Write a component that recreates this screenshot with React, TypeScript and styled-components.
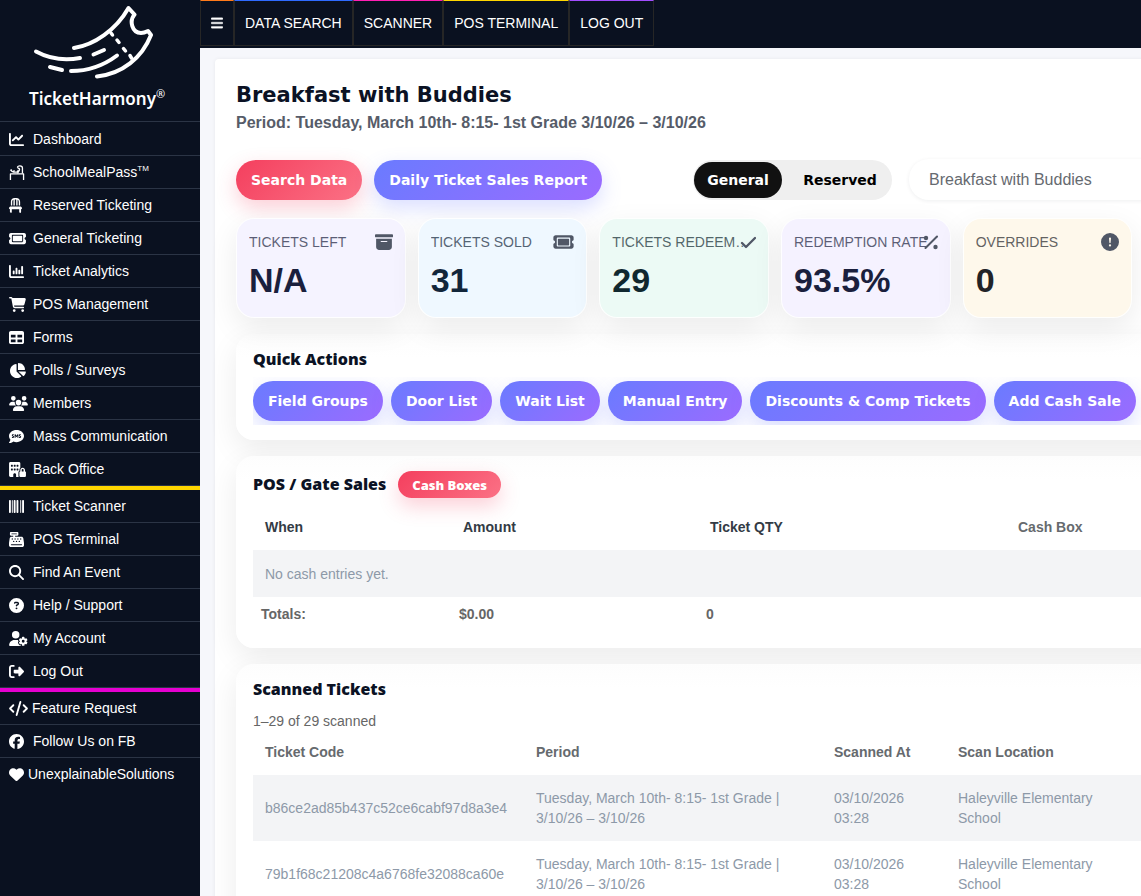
import React from "react";
import styled, { createGlobalStyle, css } from "styled-components";
import {
  FaBarcode, FaBars, FaBuildingLock, FaCartShopping, FaCashRegister, FaChair, FaChartColumn, FaChartLine,
  FaChartPie, FaCircleQuestion, FaCode, FaCommentSms, FaFacebook, FaHeart, FaMagnifyingGlass,
  FaRightFromBracket, FaTable, FaTicket, FaUserGear, FaUsers,
} from "react-icons/fa6";
import { BsArchiveFill, BsExclamationCircleFill } from "react-icons/bs";

const heavy = `"DejaVu Sans", "Liberation Sans", sans-serif`;
const rounded = `"Noto Sans", "Open Sans", sans-serif`;

const GlobalStyle = createGlobalStyle`
  *, *::before, *::after { box-sizing: border-box; }
  body { margin: 0; background: #f6f7fb; font-family: "Liberation Sans", Arial, sans-serif; font-size: 14px; color: #0b1224; }
  h1, h2, p, ul { margin: 0; padding: 0; }
  button, input { font: inherit; border: 0; }
  a { color: inherit; text-decoration: none; }
`;

const Shell = styled.div`
  display: grid;
  grid-template-columns: 200px minmax(0, 1fr);
  height: 100vh;
  overflow: hidden;
`;

const Sidebar = styled.aside`
  background: #0a1120;
  color: #fff;
  overflow: hidden;
`;

const Brand = styled.a`
  display: flex;
  flex-direction: column;
  height: 122px;
  padding: 4px 0 0 29px;
  margin-bottom: 1px;
  border-bottom: 1px solid #2b3445;
`;

const BrandName = styled.span`
  display: flex;
  font-family: ${rounded};
  font-size: 17px;
  font-weight: 600;
  line-height: 24px;
  padding-top: 7px;
  sup { font-size: 11px; font-weight: 400; line-height: 14px; }
`;

const NavList = styled.ul<{ $bar?: string }>`
  list-style: none;
  ${(p) => p.$bar && css`border-bottom: 4px solid ${p.$bar};`}
`;

const NavItem = styled.li`
  border-bottom: 1px solid #2b3445;
  ${NavList}:last-child &:last-child { border-bottom: 0; }
`;

const NavLink = styled.a`
  display: flex;
  align-items: center;
  height: 32px;
  padding-left: 9px;
  white-space: nowrap;
  sup { font-size: 8px; line-height: 10px; align-self: flex-start; padding-top: 8px; }
`;

const NavIcon = styled.span<{ $slot: number; $w: number }>`
  display: flex;
  flex: none;
  align-items: center;
  width: ${(p) => p.$slot}px;
  svg { flex: none; height: 15px; width: ${(p) => p.$w}px; }
`;

const Main = styled.main`
  overflow: hidden;
`;

const TopBar = styled.nav`
  display: flex;
  height: 48px;
  background: #0a1120;
  color: #fff;
`;

const TopLink = styled.a<{ $accent: string }>`
  display: flex;
  align-items: center;
  height: 46px;
  padding: 0 10px;
  border: 1px solid #262626;
  border-top-color: ${(p) => p.$accent};
  white-space: nowrap;
  svg { height: 14px; width: 12px; stroke: #fff; stroke-width: 16px; }
`;

const Sheet = styled.section`
  width: calc(100vw - 21px);
  margin: 11px 0 0 15px;
  padding: 24px 21px;
  background: #fff;
  border-radius: 4px;
  box-shadow: 0 0 4px rgba(15, 23, 42, 0.06);
`;

const Title = styled.h1`
  font-family: ${heavy};
  font-size: 21px;
  font-weight: 700;
  line-height: 24px;
`;

const Subtitle = styled.p`
  font-size: 16px;
  font-weight: 700;
  line-height: 24px;
  padding-top: 4px;
  color: #565c69;
`;

const Toolbar = styled.div`
  display: flex;
  align-items: center;
  gap: 12px;
  height: 41px;
  margin: 24px 0 18px;
`;

const fills = {
  red: css`background: linear-gradient(135deg, #f43f5e, #fb7185); box-shadow: 0 8px 20px rgba(244, 63, 94, 0.25);`,
  blue: css`background: linear-gradient(135deg, #6a7bff, #9b6bff); box-shadow: 0 8px 20px rgba(106, 123, 255, 0.25);`,
};

const Pill = styled.button<{ $tone: "red" | "blue"; $small?: boolean }>`
  flex: none;
  height: ${(p) => (p.$small ? 27 : 40)}px;
  padding: 0 ${(p) => (p.$small ? 14 : 15)}px;
  border-radius: 20px;
  color: #fff;
  font-family: ${(p) => (p.$small ? rounded : heavy)};
  font-size: ${(p) => (p.$small ? 13 : 14)}px;
  font-weight: ${(p) => (p.$small ? 900 : 700)};
  white-space: nowrap;
  ${(p) => fills[p.$tone]}
`;

const Toggle = styled.div`
  display: flex;
  flex: none;
  gap: 7px;
  width: 199px;
  height: 40px;
  padding: 2px 1px;
  margin-left: auto;
  border-radius: 20px;
  background: #efefef;
`;

const ToggleButton = styled.button<{ $active?: boolean }>`
  flex: ${(p) => (p.$active ? "0 0 88px" : "1")};
  padding: 0;
  border-radius: 18px;
  background: ${(p) => (p.$active ? "#111" : "transparent")};
  color: ${(p) => (p.$active ? "#fff" : "#000")};
  font-family: ${heavy};
  font-size: 14px;
  font-weight: 700;
`;

const EventInput = styled.input`
  flex: 0 0 405px;
  height: 41px;
  padding: 0 20px;
  margin-left: 5px;
  border-radius: 20px;
  background: #fff;
  color: #666a70;
  font-size: 16px;
  box-shadow: 0 1px 4px rgba(15, 23, 42, 0.07);
  outline: 0;
`;

const KpiGrid = styled.div`
  display: grid;
  grid-template-columns: repeat(6, minmax(0, 1fr));
  gap: 12px;
`;

const Kpi = styled.article<{ $bg: string; $ink: string }>`
  position: relative;
  height: 100px;
  padding: 13px 12px;
  border: 1px solid rgba(255, 255, 255, 0.9);
  border-radius: 18px;
  background: ${(p) => p.$bg};
  color: ${(p) => p.$ink};
  box-shadow: 0 10px 30px rgba(0, 0, 0, 0.08);
`;

const KpiLabel = styled.p`
  overflow: hidden;
  text-overflow: ellipsis;
  white-space: nowrap;
  line-height: 20px;
  padding-right: 4px;
  opacity: 0.7;
`;

const KpiValue = styled.p`
  font-size: 34px;
  font-weight: 700;
  line-height: 38px;
  padding-top: 9px;
`;

const KpiIcon = styled.span<{ $w: number }>`
  position: absolute;
  top: 14px;
  right: 12px;
  display: flex;
  color: #505766;
  svg { height: 18px; width: ${(p) => p.$w}px; }
`;

const Panel = styled.section`
  margin-top: 16px;
  padding: 12px 17px 15px;
  border-radius: 18px;
  background: linear-gradient(#fdfdfd, #fff 24px);
  box-shadow: 0 10px 30px rgba(0, 0, 0, 0.08);
`;

const PanelHead = styled.div`
  display: flex;
  align-items: center;
  gap: 12px;
  padding: 3px 0 8px;
`;

const PanelTitle = styled.h2`
  font-family: ${rounded};
  font-size: 16px;
  font-weight: 900;
  line-height: 27px;
`;

const ActionRow = styled.div`
  display: flex;
  gap: 8px;
  padding: 4px 0;
  margin-top: 4px;
  overflow: hidden;
`;

const Caption = styled.p`
  color: #666;
  line-height: 20px;
  padding-top: 8px;
`;

const Table = styled.table`
  width: 100%;
  table-layout: fixed;
  border-collapse: collapse;
  text-align: left;
  th { padding: 0 12px 2px; }
  td { padding: 0 12px; color: #8d99a8; line-height: 20px; }
  tbody tr:nth-child(odd) { background: #f3f4f6; }
  tfoot td { padding: 0 8px 2px; height: 36px; color: #666; font-weight: 700; }
`;

const HeadCell = styled.th<{ $muted?: boolean }>`
  height: 44px;
  color: ${(p) => (p.$muted ? "#666a6e" : "#333b45")};
`;

const Row = styled.tr<{ $tall?: boolean }>`
  height: ${(p) => (p.$tall ? 66 : 47)}px;
`;

const Col = styled.col<{ $w?: number }>`
  ${(p) => p.$w && css`width: ${p.$w}px;`}
`;

function TicketLogo() {
  return (
    <svg width="124" height="76" viewBox="29 4 124 76" fill="none" stroke="#fff" strokeWidth="4" strokeLinecap="round" strokeLinejoin="round" aria-hidden="true">
      <path d="M74 48C94 45 116 30 128.500 8L134.500 14.500C129 21 132 33 141 33C144 33 146 32 148 31L151 35C142 58 122 74 97 76.500" />
      <path d="M36 51.500C48 58 64 61 80 58" />
      <path d="M93.500 54.500L104 50M50 67L62 70M71 71C88 71 103 66 117 55.500" />
      <path d="M111 33L112.500 35M117 40L119 42.500M123.500 48.500L125.500 51M130 55.500L131.500 58" strokeWidth="3.500" />
    </svg>
  );
}

function MealIcon() {
  return (
    <svg width="16" height="16" viewBox="0 0 16 16" fill="none" stroke="#fff" strokeWidth="1.400" strokeLinejoin="round" aria-hidden="true">
      <path d="M1 16V9.500H15V16" />
      <circle cx="1.800" cy="5.500" r="1.100" fill="#fff" stroke="none" />
      <path d="M2 6.500L4.500 7.500L5 5.500M4.500 7.500H8L9.500 5.500" />
      <path d="M8.500 2.500C8.500 .5 13.800 .3 13.800 3.200V9M8.500 2.500C9 4 11.500 3 10.500 5.500L8.500 9" />
    </svg>
  );
}

function CheckIcon() {
  return (
    <svg viewBox="0 0 18 18" fill="none" stroke="currentColor" strokeWidth="2.300" strokeLinecap="round" strokeLinejoin="round" aria-hidden="true">
      <path d="M4 10L8 14L17 5" />
    </svg>
  );
}

function PercentIcon() {
  return (
    <svg viewBox="0 0 18 18" fill="currentColor" aria-hidden="true">
      <path d="M5.500 15L17 3.500" stroke="currentColor" strokeWidth="2" strokeLinecap="round" />
      <circle cx="6" cy="5" r="2.200" />
      <circle cx="15.500" cy="14" r="2.200" />
    </svg>
  );
}

type Item = { icon: React.ReactNode; label: string; tm?: boolean; slot?: number; w?: number };

const groups: { bar?: string; items: Item[] }[] = [
  {
    bar: "#ffd600",
    items: [
      { icon: <FaChartLine />, label: "Dashboard" },
      { icon: <MealIcon />, label: "SchoolMealPass", tm: true, w: 16 },
      { icon: <FaChair />, label: "Reserved Ticketing", w: 13 },
      { icon: <FaTicket />, label: "General Ticketing", w: 17 },
      { icon: <FaChartColumn />, label: "Ticket Analytics" },
      { icon: <FaCartShopping />, label: "POS Management", w: 17 },
      { icon: <FaTable />, label: "Forms" },
      { icon: <FaChartPie />, label: "Polls / Surveys", w: 17 },
      { icon: <FaUsers />, label: "Members", w: 19 },
      { icon: <FaCommentSms />, label: "Mass Communication" },
      { icon: <FaBuildingLock />, label: "Back Office", w: 17 },
    ],
  },
  {
    bar: "#e600d0",
    items: [
      { icon: <FaBarcode />, label: "Ticket Scanner" },
      { icon: <FaCashRegister />, label: "POS Terminal" },
      { icon: <FaMagnifyingGlass />, label: "Find An Event" },
      { icon: <FaCircleQuestion />, label: "Help / Support" },
      { icon: <FaUserGear />, label: "My Account", w: 19 },
      { icon: <FaRightFromBracket />, label: "Log Out" },
    ],
  },
  {
    items: [
      { icon: <FaCode />, label: "Feature Request", slot: 23, w: 19 },
      { icon: <FaFacebook />, label: "Follow Us on FB" },
      { icon: <FaHeart />, label: "UnexplainableSolutions", slot: 19 },
    ],
  },
];

const topLinks = [
  { label: "DATA SEARCH", accent: "#2f6bff" },
  { label: "SCANNER", accent: "#ff1fb4" },
  { label: "POS TERMINAL", accent: "#ffd600" },
  { label: "LOG OUT", accent: "#a24dff" },
];

const kpis = [
  { label: "TICKETS LEFT", value: "N/A", bg: "#f5f3ff", ink: "#1a1f3d", icon: <BsArchiveFill />, w: 18 },
  { label: "TICKETS SOLD", value: "31", bg: "#eff8ff", ink: "#12263a", icon: <FaTicket />, w: 21 },
  { label: "TICKETS REDEEMED", value: "29", bg: "#ecfaf5", ink: "#10282f", icon: <CheckIcon />, w: 18 },
  { label: "REDEMPTION RATE", value: "93.5%", bg: "#f5f2ff", ink: "#1a1f3d", icon: <PercentIcon />, w: 18 },
  { label: "OVERRIDES", value: "0", bg: "#fef8eb", ink: "#222327", icon: <BsExclamationCircleFill />, w: 18 },
];

const actions = ["Field Groups", "Door List", "Wait List", "Manual Entry", "Discounts & Comp Tickets", "Add Cash Sale"];

const codes = ["b86ce2ad85b437c52ce6cabf97d8a3e4", "79b1f68c21208c4a6768fe32088ca60e"];

export default function App() {
  return (
    <>
      <GlobalStyle />
      <Shell>
        <Sidebar>
          <Brand href="#">
            <TicketLogo />
            <BrandName>TicketHarmony<sup>®</sup></BrandName>
          </Brand>
          {groups.map((group, i) => (
            <NavList key={i} $bar={group.bar}>
              {group.items.map((item) => (
                <NavItem key={item.label}>
                  <NavLink href="#">
                    <NavIcon $slot={item.slot ?? 24} $w={item.w ?? 15}>{item.icon}</NavIcon>
                    {item.label}
                    {item.tm && <sup>TM</sup>}
                  </NavLink>
                </NavItem>
              ))}
            </NavList>
          ))}
        </Sidebar>
        <Main>
          <TopBar>
            <TopLink href="#" $accent="#ff7a1a" aria-label="Menu"><FaBars /></TopLink>
            {topLinks.map((link) => (
              <TopLink key={link.label} href="#" $accent={link.accent}>{link.label}</TopLink>
            ))}
          </TopBar>
          <Sheet>
            <Title>Breakfast with Buddies</Title>
            <Subtitle>Period: Tuesday, March 10th- 8:15- 1st Grade 3/10/26 – 3/10/26</Subtitle>
            <Toolbar>
              <Pill $tone="red">Search Data</Pill>
              <Pill $tone="blue">Daily Ticket Sales Report</Pill>
              <Toggle>
                <ToggleButton $active>General</ToggleButton>
                <ToggleButton>Reserved</ToggleButton>
              </Toggle>
              <EventInput aria-label="Event" defaultValue="Breakfast with Buddies" />
            </Toolbar>
            <KpiGrid>
              {kpis.map((kpi) => (
                <Kpi key={kpi.label} $bg={kpi.bg} $ink={kpi.ink}>
                  <KpiLabel>{kpi.label}</KpiLabel>
                  <KpiValue>{kpi.value}</KpiValue>
                  <KpiIcon $w={kpi.w}>{kpi.icon}</KpiIcon>
                </Kpi>
              ))}
            </KpiGrid>
            <Panel>
              <PanelTitle>Quick Actions</PanelTitle>
              <ActionRow>
                {actions.map((action) => <Pill key={action} $tone="blue">{action}</Pill>)}
              </ActionRow>
            </Panel>
            <Panel>
              <PanelHead>
                <PanelTitle>POS / Gate Sales</PanelTitle>
                <Pill $tone="red" $small>Cash Boxes</Pill>
              </PanelHead>
              <Table>
                <colgroup><Col $w={198} /><Col $w={247} /><Col $w={308} /><Col /></colgroup>
                <thead>
                  <tr>
                    <HeadCell>When</HeadCell>
                    <HeadCell>Amount</HeadCell>
                    <HeadCell>Ticket QTY</HeadCell>
                    <HeadCell $muted>Cash Box</HeadCell>
                  </tr>
                </thead>
                <tbody>
                  <Row><td colSpan={4}>No cash entries yet.</td></Row>
                </tbody>
                <tfoot>
                  <tr><td>Totals:</td><td>$0.00</td><td>0</td><td /></tr>
                </tfoot>
              </Table>
            </Panel>
            <Panel>
              <PanelTitle>Scanned Tickets</PanelTitle>
              <Caption>1–29 of 29 scanned</Caption>
              <Table>
                <colgroup><Col $w={271} /><Col $w={298} /><Col $w={124} /><Col $w={182} /><Col /></colgroup>
                <thead>
                  <tr>
                    <HeadCell $muted>Ticket Code</HeadCell>
                    <HeadCell $muted>Period</HeadCell>
                    <HeadCell $muted>Scanned At</HeadCell>
                    <HeadCell $muted>Scan Location</HeadCell>
                    <td />
                  </tr>
                </thead>
                <tbody>
                  {codes.map((code) => (
                    <Row key={code} $tall>
                      <td>{code}</td>
                      <td>Tuesday, March 10th- 8:15- 1st Grade | 3/10/26 – 3/10/26</td>
                      <td>03/10/2026 03:28</td>
                      <td>Haleyville Elementary School</td>
                      <td />
                    </Row>
                  ))}
                </tbody>
              </Table>
            </Panel>
          </Sheet>
        </Main>
      </Shell>
    </>
  );
}
